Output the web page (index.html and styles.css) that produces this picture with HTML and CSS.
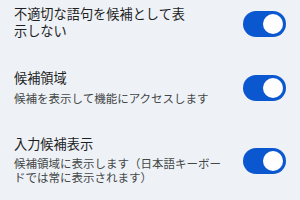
FILE: index.html
```html
<!DOCTYPE html>
<html>
<head>
    <meta charset="utf-8">
    <title>入力候補</title>
    <link rel="stylesheet" href="styles.css">
</head>
<body>
    <div class="list">
        <div class="row">
            <div class="text">
                <div class="title">不適切な語句を候補として表<br>示しない</div>
            </div>
            <div class="switch on"><div class="knob"></div></div>
        </div>
        <div class="row">
            <div class="text">
                <div class="title">候補領域</div>
                <div class="summary">候補を表示して機能にアクセスします</div>
            </div>
            <div class="switch on"><div class="knob"></div></div>
        </div>
        <div class="row">
            <div class="text">
                <div class="title">入力候補表示</div>
                <div class="summary">候補領域に表示します（日本語キーボー<br>ドでは常に表示されます）</div>
            </div>
            <div class="switch on"><div class="knob"></div></div>
        </div>
    </div>
</body>
</html>
```

FILE: styles.css
```css
body {
    margin: 0;
    background-color: #eef2f7;
    font-family: Roboto, "Noto Sans CJK JP", sans-serif;
}
.list {
    display: flex;
    flex-direction: column;
    gap: 31px;
    padding: 7px 14px 0 14px;
}
.row {
    display: flex;
    align-items: center;
    justify-content: space-between;
}
.text {
    display: flex;
    flex-direction: column;
    gap: 5px;
}
.title {
    font-size: 13.2px;
    line-height: 16.5px;
    color: #1f1f1f;
    white-space: nowrap;
}
.summary {
    font-size: 11.5px;
    line-height: 13.3px;
    color: #444746;
    white-space: nowrap;
}
.switch {
    width: 43px;
    height: 26px;
    border-radius: 13px;
    background-color: #0b57d0;
    display: flex;
    align-items: center;
    justify-content: flex-end;
    padding: 0 3px;
    box-sizing: border-box;
    flex-shrink: 0;
}
.knob {
    width: 20px;
    height: 20px;
    border-radius: 50%;
    background-color: #fff;
}
```
